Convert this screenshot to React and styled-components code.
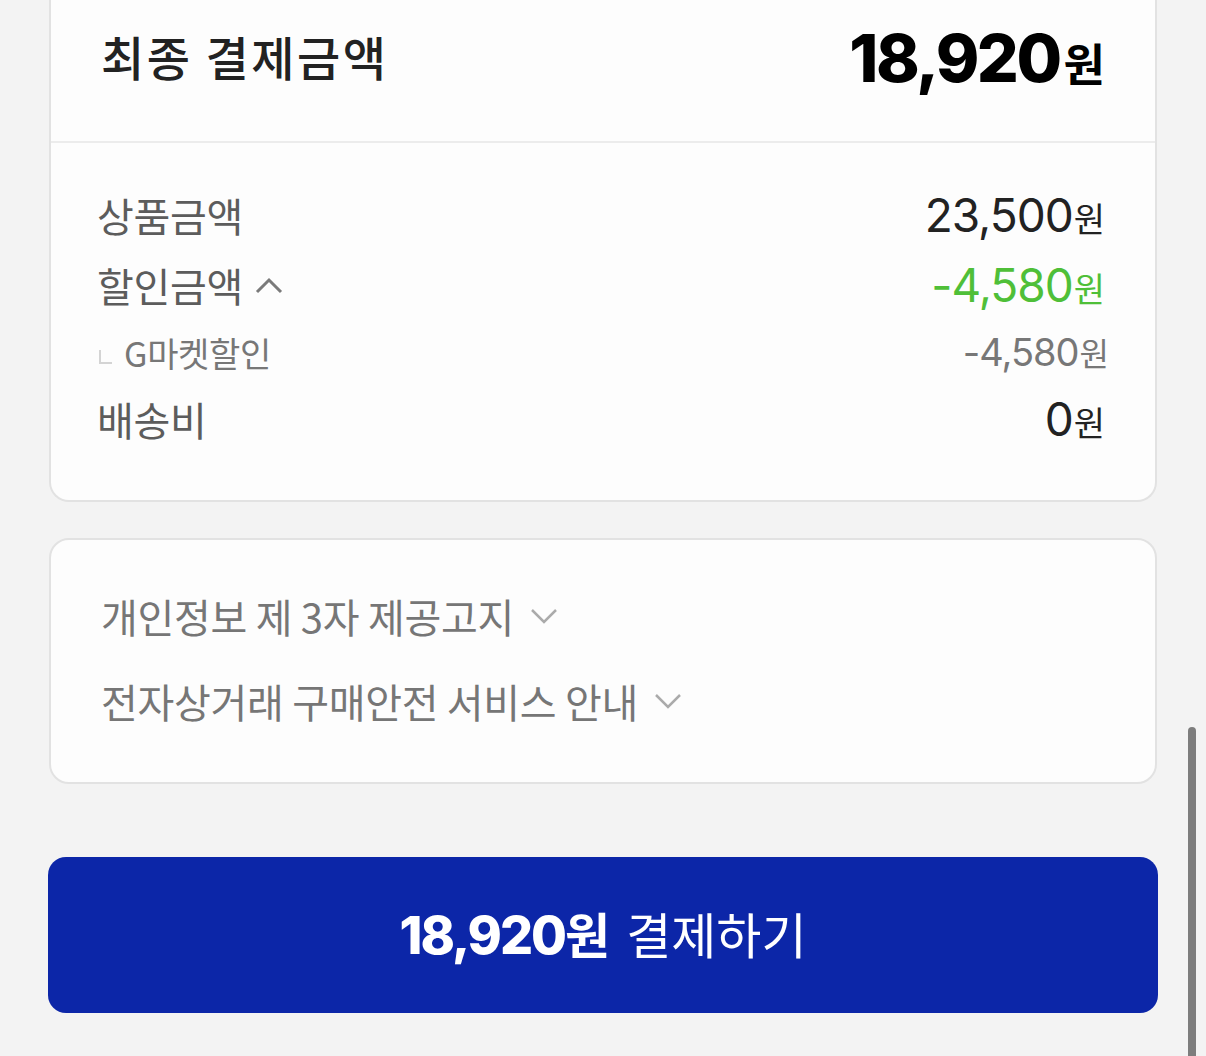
import styled, { createGlobalStyle } from "styled-components";

const GlobalStyle = createGlobalStyle`
  html, body {
    margin: 0;
    padding: 0;
    background: #f3f3f3;
  }
  body {
    font-family: "Noto Sans CJK KR", "Noto Sans", sans-serif;
    overflow: hidden;
  }
`;

const Page = styled.div`
  width: 1206px;
  height: 1056px;
  box-sizing: border-box;
  padding: 0 49px 0 49px;
  display: flex;
  flex-direction: column;
`;

const Card = styled.section`
  background: #fdfdfd;
  border: 2px solid #e2e2e2;
  border-radius: ${(p) => (p.$open ? "0 0 20px 20px" : "20px")};
  border-top: ${(p) => (p.$open ? "none" : "2px solid #e2e2e2")};
  margin-bottom: ${(p) => p.$gap}px;
`;

const TotalHeader = styled.div`
  height: 143px;
  box-sizing: border-box;
  padding: 0 50px 30px 50px;
  display: flex;
  align-items: center;
  justify-content: space-between;
  border-bottom: 2px solid #ececec;
`;

const TotalLabel = styled.h2`
  margin: 0;
  font-size: 47px;
  font-weight: 500;
  color: #222;
  letter-spacing: 2.5px;
`;

const TotalPrice = styled.div`
  display: flex;
  align-items: baseline;
  color: #000;
  margin-top: 8px;
`;

const BigNum = styled.span`
  font-family: "Inter", "Roboto", sans-serif;
  font-weight: 800;
  font-size: 66px;
  letter-spacing: -2.5px;
  line-height: 1;
`;

const BigWon = styled.span`
  font-size: 45px;
  font-weight: 700;
  margin-left: 4px;
`;

const Details = styled.div`
  padding: 37px 50px 46px 46px;
  display: flex;
  flex-direction: column;
`;

const Row = styled.div`
  height: ${(p) => (p.$sub ? 64 : 70)}px;
  display: flex;
  align-items: center;
  justify-content: space-between;
`;

const Label = styled.span`
  display: flex;
  align-items: center;
  font-size: ${(p) => (p.$sub ? 34 : 40)}px;
  color: ${(p) => (p.$sub ? "#777" : "#5c5c5c")};
  letter-spacing: -0.3px;
`;

const Corner = styled.span`
  width: 11px;
  height: 12px;
  border-left: 2px solid #d4d4d4;
  border-bottom: 2px solid #d4d4d4;
  margin: 10px 12px 0 2px;
`;

const Value = styled.span`
  display: flex;
  align-items: baseline;
  color: ${(p) => p.$color || "#222"};
  margin-right: ${(p) => (p.$sub ? -4 : 0)}px;
`;

const Num = styled.span`
  font-family: "Inter", "Roboto", sans-serif;
  font-size: ${(p) => (p.$sub ? 38 : 46)}px;
  font-weight: 400;
  letter-spacing: -1px;
`;

const Won = styled.span`
  font-size: ${(p) => (p.$sub ? 32 : 34)}px;
  margin-left: 1px;
`;

const Chevron = styled.svg`
  width: ${(p) => p.$w}px;
  height: ${(p) => p.$h}px;
  margin-left: ${(p) => p.$ml}px;
  flex: none;
`;

const Notices = styled.div`
  padding: 33px 50px 39px 50px;
  display: flex;
  flex-direction: column;
`;

const NoticeLine = styled.div`
  height: 85px;
  display: flex;
  align-items: center;
  font-size: 40px;
  color: #767676;
  letter-spacing: -0.3px;
`;

const PayButton = styled.button`
  margin: 0 -1px;
  height: 156px;
  border: none;
  border-radius: 18px;
  background: #0c26a8;
  color: #fff;
  display: flex;
  align-items: center;
  justify-content: center;
  font-family: "Noto Sans CJK KR", "Noto Sans", sans-serif;
  font-size: 49px;
  letter-spacing: 0px;
  padding-bottom: 6px;
`;

const PayAmount = styled.span`
  display: flex;
  align-items: baseline;
  font-weight: 700;
  margin-right: 16px;
`;

const PayNum = styled.span`
  font-family: "Inter", "Roboto", sans-serif;
  font-weight: 800;
  font-size: 52px;
  letter-spacing: -2px;
`;

const Scrollbar = styled.div`
  position: fixed;
  right: 10px;
  top: 727px;
  width: 8px;
  height: 340px;
  border-radius: 4px;
  background: #7d7d7d;
`;

const Up = () => (
  <Chevron $w={28} $h={18} $ml={12} viewBox="0 0 28 18">
    <polyline points="2,16 14,4 26,16" fill="none" stroke="#7a7a7a" strokeWidth="3" />
  </Chevron>
);

const Down = () => (
  <Chevron $w={28} $h={18} $ml={16} viewBox="0 0 28 18">
    <polyline points="2,3 14,15 26,3" fill="none" stroke="#ababab" strokeWidth="2.5" />
  </Chevron>
);

const PriceRow = ({ label, amount, color, sub, toggle }) => (
  <Row $sub={sub}>
    <Label $sub={sub}>
      {sub && <Corner />}
      {label}
      {toggle && <Up />}
    </Label>
    <Value $color={color} $sub={sub}>
      <Num $sub={sub}>{amount}</Num>
      <Won $sub={sub}>원</Won>
    </Value>
  </Row>
);

export default function App() {
  return (
    <>
      <GlobalStyle />
      <Page>
        <Card $open $gap={36}>
          <TotalHeader>
            <TotalLabel>최종 결제금액</TotalLabel>
            <TotalPrice>
              <BigNum>18,920</BigNum>
              <BigWon>원</BigWon>
            </TotalPrice>
          </TotalHeader>
          <Details>
            <PriceRow label="상품금액" amount="23,500" />
            <PriceRow label="할인금액" amount="-4,580" color="#4fbf38" toggle />
            <PriceRow label="G마켓할인" amount="-4,580" color="#777" sub />
            <PriceRow label="배송비" amount="0" />
          </Details>
        </Card>
        <Card $gap={73}>
          <Notices>
            <NoticeLine>
              개인정보 제 3자 제공고지
              <Down />
            </NoticeLine>
            <NoticeLine>
              전자상거래 구매안전 서비스 안내
              <Down />
            </NoticeLine>
          </Notices>
        </Card>
        <PayButton>
          <PayAmount>
            <PayNum>18,920</PayNum>원
          </PayAmount>
          결제하기
        </PayButton>
      </Page>
      <Scrollbar />
    </>
  );
}
